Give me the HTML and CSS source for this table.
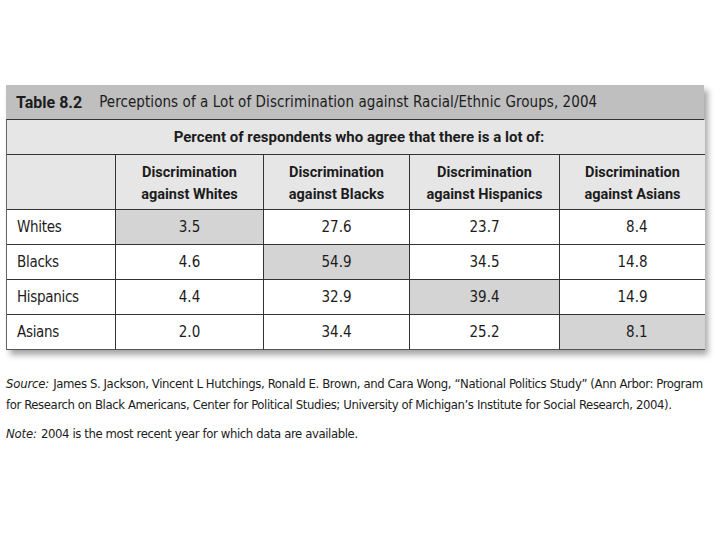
FILE: index.html
```html
<!DOCTYPE html>
<html>
<head>
<meta charset="utf-8">
<link rel="stylesheet" href="styles.css">
</head>
<body>
<div class="page">
  <div class="table">
    <div class="title"><b>Table 8.2</b><span class="title-text">Perceptions of a Lot of Discrimination against Racial/Ethnic Groups, 2004</span></div>
    <div class="grid">
      <div class="span">Percent of respondents who agree that there is a lot of:</div>
      <div class="cell head blank"></div>
      <div class="cell head">Discrimination<br>against Whites</div>
      <div class="cell head">Discrimination<br>against Blacks</div>
      <div class="cell head">Discrimination<br>against Hispanics</div>
      <div class="cell head last">Discrimination<br>against Asians</div>

      <div class="cell label">Whites</div>
      <div class="cell num hl">3.5</div>
      <div class="cell num">27.6</div>
      <div class="cell num">23.7</div>
      <div class="cell num last"><span class="dec">8.4</span></div>

      <div class="cell label">Blacks</div>
      <div class="cell num">4.6</div>
      <div class="cell num hl">54.9</div>
      <div class="cell num">34.5</div>
      <div class="cell num last"><span class="dec">14.8</span></div>

      <div class="cell label">Hispanics</div>
      <div class="cell num">4.4</div>
      <div class="cell num">32.9</div>
      <div class="cell num hl">39.4</div>
      <div class="cell num last"><span class="dec">14.9</span></div>

      <div class="cell label bottom">Asians</div>
      <div class="cell num bottom">2.0</div>
      <div class="cell num bottom">34.4</div>
      <div class="cell num bottom">25.2</div>
      <div class="cell num last bottom hl"><span class="dec">8.1</span></div>
    </div>
  </div>
  <div class="notes">
    <p><i>Source:</i> James S. Jackson, Vincent L Hutchings, Ronald E. Brown, and Cara Wong, “National Politics Study” (Ann Arbor: Program for Research on Black Americans, Center for Political Studies; University of Michigan’s Institute for Social Research, 2004).</p>
    <p><i>Note:</i> 2004 is the most recent year for which data are available.</p>
  </div>
</div>
</body>
</html>
```
FILE: styles.css
```css
html, body {
  margin: 0;
  padding: 0;
  background: #ffffff;
}
body {
  font-family: "DejaVu Sans Condensed", "Liberation Sans", sans-serif;
  color: #1c1c1c;
}
.page {
  padding: 85px 16px 0 6px;
}
.table {
  width: 698px;
  box-shadow: 4px 5px 6px rgba(0, 0, 0, 0.35);
}
.title {
  height: 34px;
  background: #bfbfbf;
  display: flex;
  align-items: center;
  padding-left: 10px;
  font-size: 15px;
  box-sizing: border-box;
}
.title b {
  font-family: "Roboto", "Liberation Sans", sans-serif;
  font-weight: bold;
  font-size: 16px;
}
.title-text {
  margin-left: 17px;
  letter-spacing: 0.07px;
}
.grid {
  display: grid;
  grid-template-columns: 109px 148px 146px 150px 145px;
  grid-template-rows: 35px 55px 35px 35px 35px 35px;
  border-top: 1px solid #333;
  border-left: 1px solid #666;
  border-right: 1px solid #333;
  box-sizing: border-box;
  font-size: 15px;
}
.span {
  grid-column: 1 / -1;
  background: #e6e6e6;
  font-family: "Roboto", "Liberation Sans", sans-serif;
  font-weight: bold;
  font-size: 15px;
  display: flex;
  align-items: center;
  justify-content: center;
  border-bottom: 1px solid #333;
  padding-left: 6px;
}
.cell {
  display: flex;
  align-items: center;
  border-right: 1px solid #333;
  border-bottom: 1px solid #333;
  background: #ffffff;
}
.cell.last {
  border-right: none;
}
.cell.bottom {
  border-bottom: 1px solid #555;
}
.head {
  background: #e6e6e6;
  font-family: "Roboto", "Liberation Sans", sans-serif;
  font-weight: bold;
  font-size: 14.5px;
  justify-content: center;
  text-align: center;
  line-height: 22px;
  padding-top: 3px;
}
.label {
  padding-left: 10px;
  letter-spacing: -0.3px;
}
.num {
  justify-content: center;
}
.hl {
  background: #d4d4d4;
}
.dec {
  display: inline-block;
  width: 30px;
  text-align: right;
}
.notes {
  margin-top: 23px;
  font-size: 13px;
  letter-spacing: -0.4px;
  line-height: 21px;
  width: 700px;
}
.notes i {
  letter-spacing: -0.2px;
  margin-right: 1px;
}
.notes p {
  margin: 0 0 8px 0;
}
```
